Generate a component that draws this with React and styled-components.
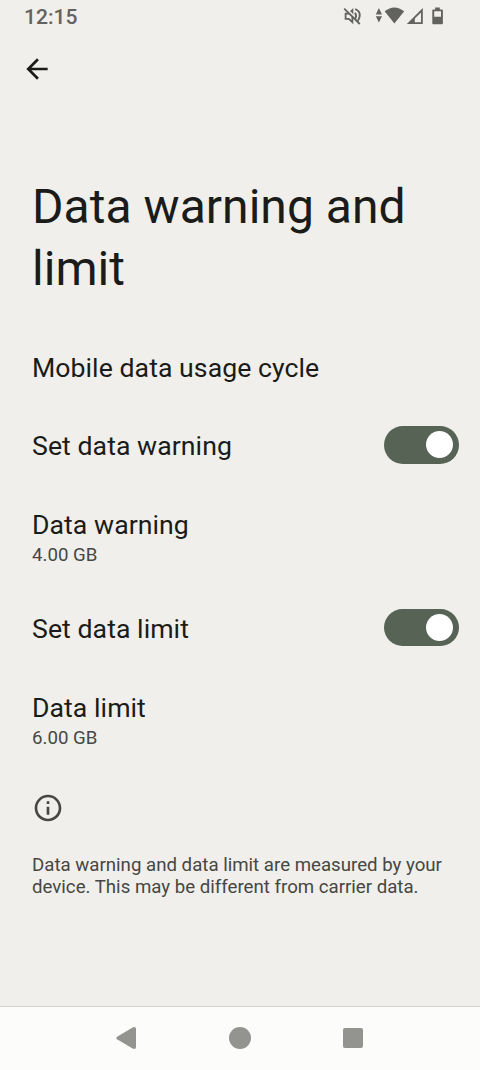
import React, { useState } from "react";
import styled, { createGlobalStyle } from "styled-components";

const App = () => {
  const [warningOn, setWarningOn] = useState(true);
  const [limitOn, setLimitOn] = useState(true);

  return (
    <Screen>
      <GlobalStyle />

      <StatusBar>
        <Clock>12:15</Clock>
        <StatusIcons />
      </StatusBar>

      <AppBar>
        <BackButton aria-label="Back">
          <svg width="32" height="32" viewBox="0 0 24 24" fill="#1b1c19">
            <path d="M20 11H7.83l5.59-5.59L12 4l-8 8 8 8 1.41-1.41L7.83 13H20v-2z" />
          </svg>
        </BackButton>
      </AppBar>

      <Title>Data warning and limit</Title>

      <List>
        <Row>
          <Label>Mobile data usage cycle</Label>
        </Row>

        <Row>
          <Label>Set data warning</Label>
          <Switch $on={warningOn} onClick={() => setWarningOn(!warningOn)}>
            <Thumb />
          </Switch>
        </Row>

        <Row $tall>
          <Label>Data warning</Label>
          <Summary>4.00 GB</Summary>
        </Row>

        <Row>
          <Label>Set data limit</Label>
          <Switch $on={limitOn} onClick={() => setLimitOn(!limitOn)}>
            <Thumb />
          </Switch>
        </Row>

        <Row $tall>
          <Label>Data limit</Label>
          <Summary>6.00 GB</Summary>
        </Row>
      </List>

      <Footer>
        <svg width="32" height="32" viewBox="0 0 24 24" fill="#464743">
          <path d="M11 7h2v2h-2zm0 4h2v6h-2zm1-9C6.48 2 2 6.48 2 12s4.48 10 10 10 10-4.48 10-10S17.52 2 12 2zm0 18c-4.41 0-8-3.59-8-8s3.59-8 8-8 8 3.59 8 8-3.59 8-8 8z" />
        </svg>
        <FooterText>
          Data warning and data limit are measured by your device. This may be
          different from carrier data.
        </FooterText>
      </Footer>

      <NavBar>
        <svg width="22" height="24" viewBox="0 0 22 24" fill="#939390">
          <path d="M2.1 10.7 17.6 1.4Q21 0 21 3V21Q21 24 17.6 22.6L2.1 13.3Q.3 12 2.1 10.7Z" />
        </svg>
        <HomeKey />
        <RecentsKey />
      </NavBar>
    </Screen>
  );
};

const StatusIcons = () => (
  <svg width="104" height="24" viewBox="342 4 104 24" fill="#62625f">
    {/* muted speaker */}
    <g fill="none" stroke="#62625f" strokeWidth="1.8">
      <path d="M345.6 13.6h3.2l3.6-3.4v12l-3.6-3.4h-3.2z" />
      <path d="M355 12.8q2.2 3.2 0 6.4M355.2 9q7.6 3.2 2.6 12" />
      <path d="M345.4 8 353.6 16" stroke="#f0efeb" strokeWidth="2" />
      <path d="M344.2 8.6 359.8 24" />
    </g>
    {/* data arrows */}
    <path d="M375.8 14.4h6.2L378.9 8zM375.8 16.2h6.2L378.9 22.4z" />
    {/* wifi */}
    <path d="M384.6 11.2q9.8-7.6 19.6 0L394.4 23.6z" />
    {/* signal */}
    <path
      d="M422.8 8v16h-16zM421 12.4 414.8 18.6V22.2H421z"
      fillRule="evenodd"
    />
    {/* battery */}
    <path
      d="M435.2 7.6h4.6v1.8h2.2q.9 0 .9.9v13q0 .9-.9.9h-8.8q-.9 0-.9-.9v-13q0-.9.9-.9h2zM434.2 11.2v5.6h6.8v-5.6z"
      fillRule="evenodd"
    />
  </svg>
);

const GlobalStyle = createGlobalStyle`
  body {
    margin: 0;
    background-color: #f0efeb;
    font-family: Roboto, sans-serif;
  }

  svg {
    display: block;
    flex-shrink: 0;
  }
`;

const Screen = styled.div`
  display: flex;
  flex-direction: column;
  width: 480px;
  height: 1070px;
  background-color: #f0efeb;
  color: #1b1c19;
  overflow: hidden;
`;

const StatusBar = styled.div`
  display: flex;
  justify-content: space-between;
  align-items: center;
  height: 32px;
  padding: 0 34px 0 24px;
  box-sizing: border-box;
`;

const Clock = styled.span`
  padding-top: 2px;
  color: #62625f;
  font-size: 21.1px;
  font-weight: 500;
  line-height: 32px;
`;

const AppBar = styled.div`
  display: flex;
  align-items: center;
  height: 74px;
  padding-left: 21px;
`;

const BackButton = styled.button`
  padding: 0;
  border: none;
  background: none;
  cursor: pointer;
`;

const Title = styled.h1`
  margin: 70px 32px 0;
  font-size: 48px;
  font-weight: 400;
  line-height: 62px;
  letter-spacing: 0.04px;
`;

const List = styled.div`
  display: flex;
  flex-direction: column;
  margin-top: 28.4px;
`;

const Row = styled.div`
  display: flex;
  flex-direction: ${({ $tall }) => ($tall ? "column" : "row")};
  justify-content: space-between;
  height: ${({ $tall }) => ($tall ? "104px" : "78.67px")};
  padding: 24.4px 21px 23.4px 32px;
  box-sizing: border-box;
`;

const Label = styled.div`
  font-size: 26.67px;
  line-height: 31.3px;
  letter-spacing: 0.05px;
`;

const Summary = styled.div`
  color: #464743;
  font-size: 18.67px;
  line-height: 22px;
`;

const Switch = styled.button`
  display: flex;
  align-items: center;
  justify-content: ${({ $on }) => ($on ? "flex-end" : "flex-start")};
  width: 75px;
  height: 37.4px;
  margin-top: -5.3px;
  padding: 0 5.8px;
  border: none;
  border-radius: 19px;
  background-color: ${({ $on }) => ($on ? "#566355" : "#c6c7c0")};
  cursor: pointer;
`;

const Thumb = styled.span`
  width: 27px;
  height: 27px;
  border-radius: 50%;
  background-color: #ffffff;
`;

const Footer = styled.div`
  flex: 1;
  padding: 20px 32px 0;
`;

const FooterText = styled.p`
  margin: 30px 0 0;
  color: #464743;
  font-size: 18.67px;
  line-height: 22px;
`;

const NavBar = styled.div`
  display: flex;
  justify-content: space-between;
  align-items: center;
  height: 64px;
  padding: 0 117px 2px 115px;
  box-sizing: border-box;
  border-top: 1px solid #d3d3d0;
  background-color: #fcfcfa;
`;

const HomeKey = styled.span`
  width: 22px;
  height: 22px;
  border-radius: 50%;
  background-color: #939390;
`;

const RecentsKey = styled.span`
  width: 20px;
  height: 20px;
  border-radius: 2px;
  background-color: #939390;
`;

export default App;
